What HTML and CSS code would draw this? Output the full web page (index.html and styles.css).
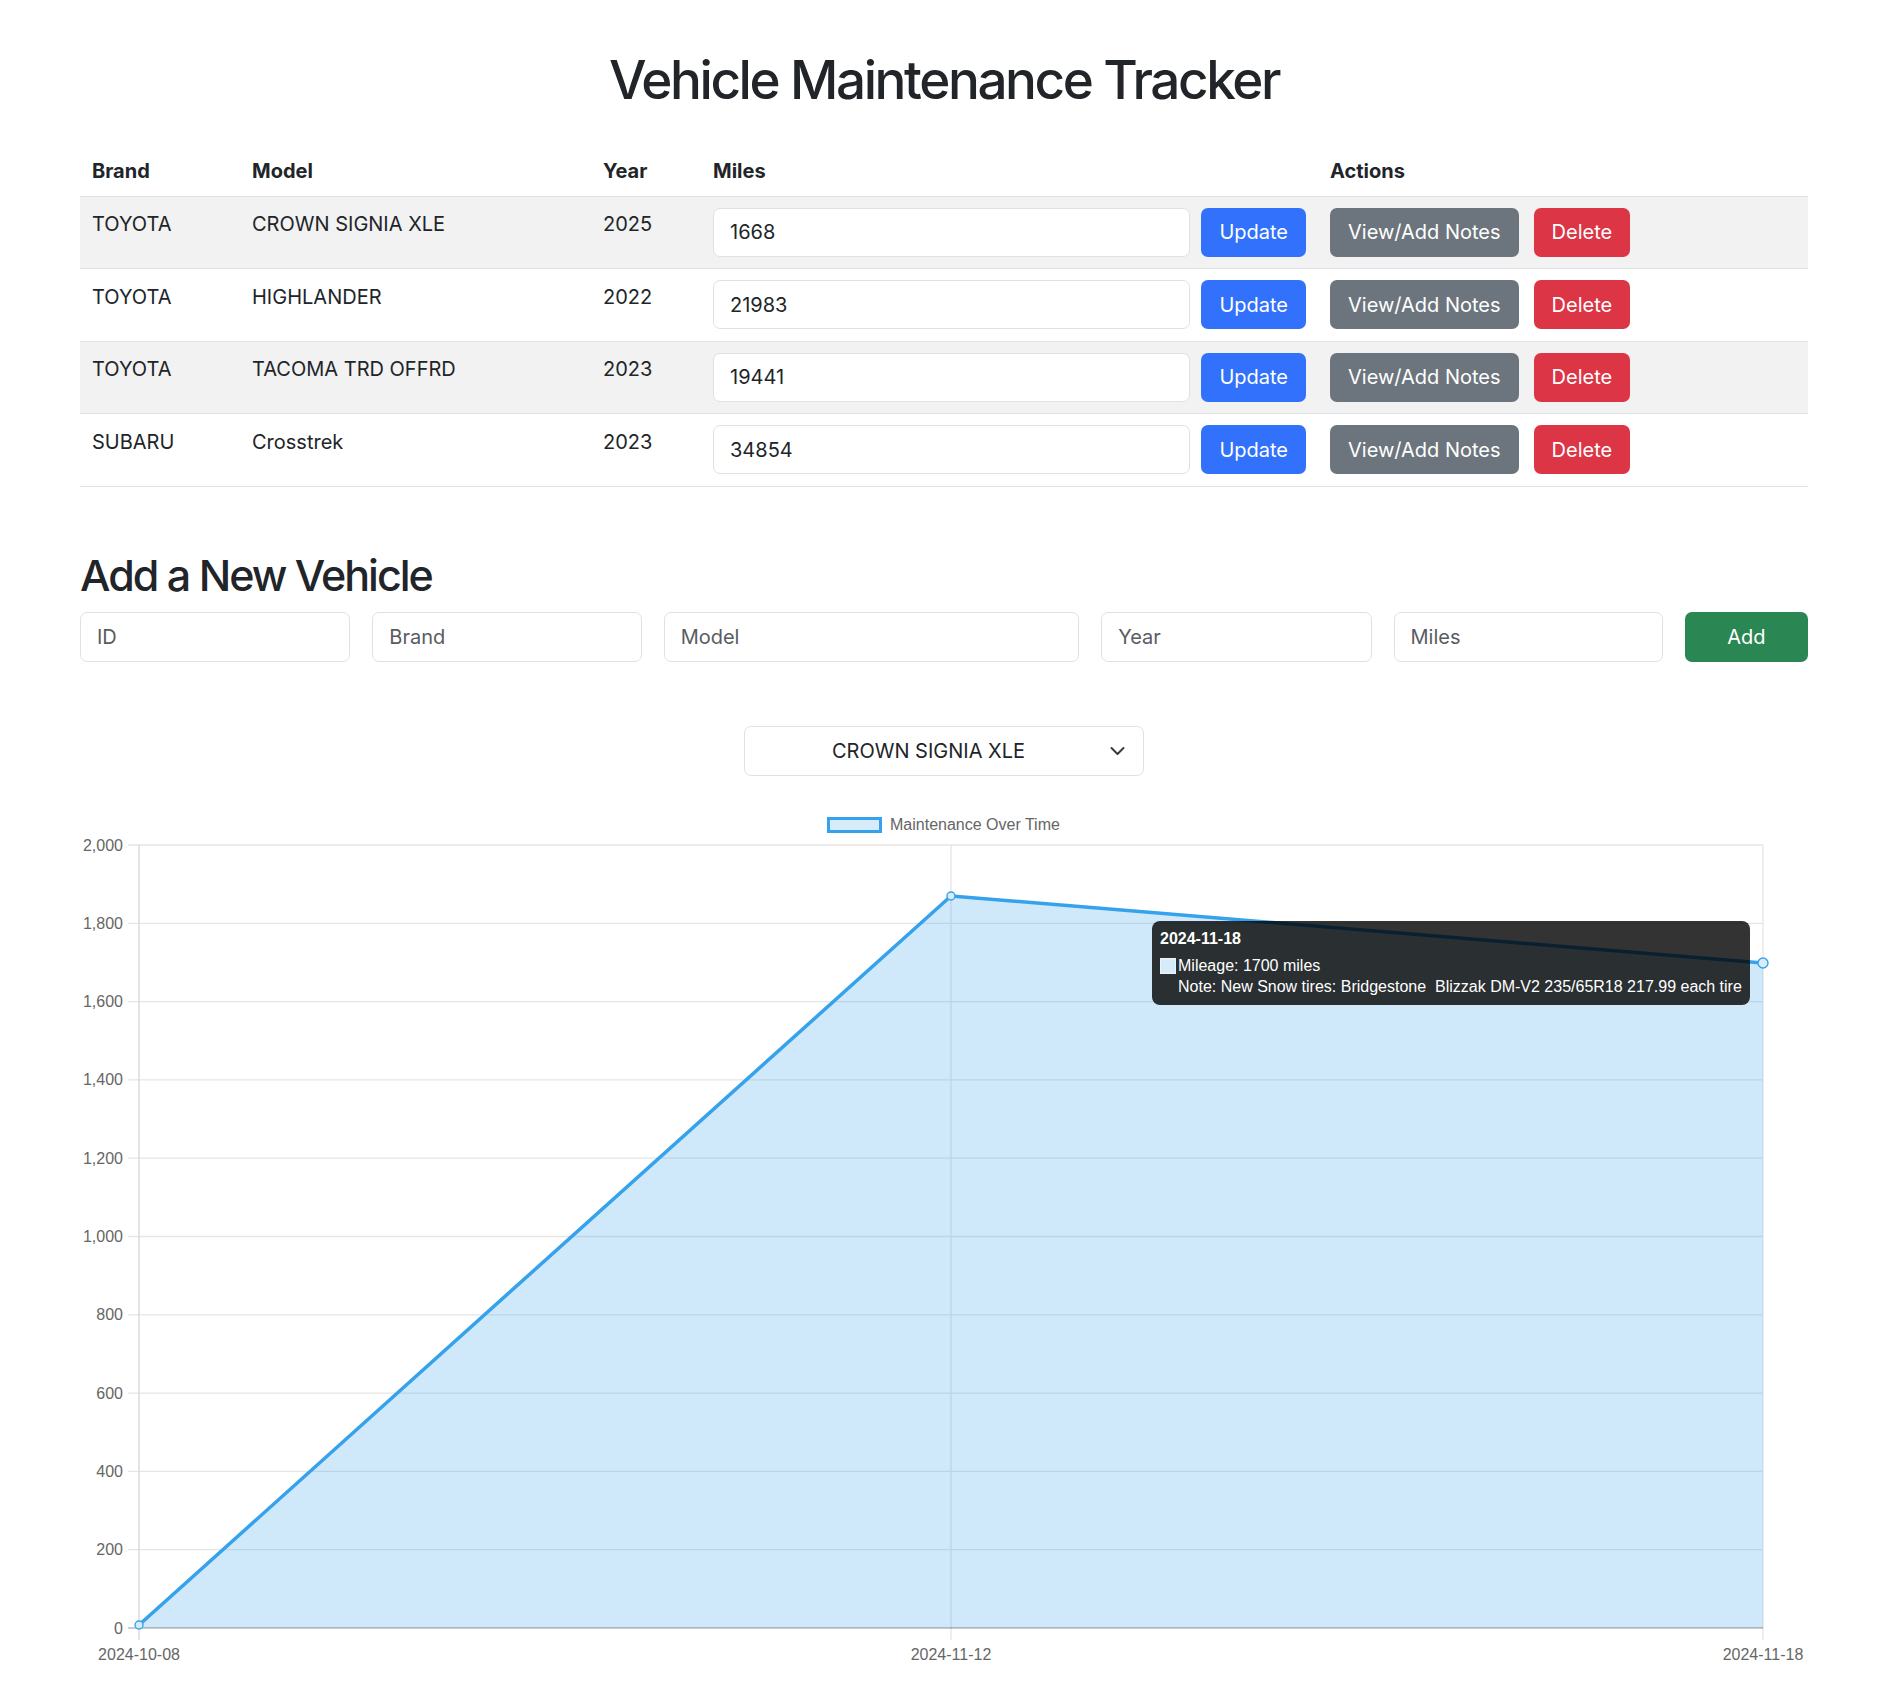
FILE: index.html
```html
<!DOCTYPE html>
<html lang="en">
<head>
<meta charset="utf-8">
<title>Vehicle Maintenance Tracker</title>
<link rel="stylesheet" href="styles.css">
</head>
<body>
<div class="container">
  <h1 class="page-title">Vehicle Maintenance Tracker</h1>

  <table class="vehicle-table">
    <colgroup>
      <col class="c-brand"><col class="c-model"><col class="c-year"><col class="c-miles"><col class="c-actions">
    </colgroup>
    <thead>
      <tr><th>Brand</th><th>Model</th><th>Year</th><th>Miles</th><th>Actions</th></tr>
    </thead>
    <tbody>
      <tr>
        <td class="txt">TOYOTA</td><td class="txt">CROWN SIGNIA XLE</td><td class="txt">2025</td>
        <td><div class="miles-cell"><input class="field" type="text" value="1668"><button class="btn btn-primary">Update</button></div></td>
        <td><div class="actions-cell"><button class="btn btn-secondary">View/Add Notes</button><button class="btn btn-danger">Delete</button></div></td>
      </tr>
      <tr>
        <td class="txt">TOYOTA</td><td class="txt">HIGHLANDER</td><td class="txt">2022</td>
        <td><div class="miles-cell"><input class="field" type="text" value="21983"><button class="btn btn-primary">Update</button></div></td>
        <td><div class="actions-cell"><button class="btn btn-secondary">View/Add Notes</button><button class="btn btn-danger">Delete</button></div></td>
      </tr>
      <tr>
        <td class="txt">TOYOTA</td><td class="txt">TACOMA TRD OFFRD</td><td class="txt">2023</td>
        <td><div class="miles-cell"><input class="field" type="text" value="19441"><button class="btn btn-primary">Update</button></div></td>
        <td><div class="actions-cell"><button class="btn btn-secondary">View/Add Notes</button><button class="btn btn-danger">Delete</button></div></td>
      </tr>
      <tr>
        <td class="txt">SUBARU</td><td class="txt">Crosstrek</td><td class="txt">2023</td>
        <td><div class="miles-cell"><input class="field" type="text" value="34854"><button class="btn btn-primary">Update</button></div></td>
        <td><div class="actions-cell"><button class="btn btn-secondary">View/Add Notes</button><button class="btn btn-danger">Delete</button></div></td>
      </tr>
    </tbody>
  </table>

  <h2 class="section-title">Add a New Vehicle</h2>
  <form class="add-form">
    <input class="field" type="text" placeholder="ID">
    <input class="field" type="text" placeholder="Brand">
    <input class="field" type="text" placeholder="Model">
    <input class="field" type="text" placeholder="Year">
    <input class="field" type="text" placeholder="Miles">
    <button class="btn btn-success" type="button">Add</button>
  </form>

  <div class="select-row">
    <div class="select-wrap">
      <select class="vehicle-select">
        <option>CROWN SIGNIA XLE</option>
        <option>HIGHLANDER</option>
        <option>TACOMA TRD OFFRD</option>
        <option>Crosstrek</option>
      </select>
      <svg class="chevron" viewBox="0 0 16 16" aria-hidden="true"><path d="m2 5 6 6 6-6" fill="none" stroke="#343a40" stroke-width="2" stroke-linecap="round" stroke-linejoin="round"/></svg>
    </div>
  </div>

  <div class="chart-wrap">
    <svg class="chart" width="1728" height="881" viewBox="0 0 1728 881">
      <!-- legend -->
      <rect x="748.5" y="18.5" width="52" height="13" fill="rgba(54,162,235,0.2)" stroke="#36a2eb" stroke-width="3"/>
      <text class="chart-text" x="810" y="30">Maintenance Over Time</text>

      <!-- horizontal grid -->
      <g stroke="#e5e5e5" stroke-width="1.3">
        <line x1="48" y1="45" x2="1683" y2="45"/>
        <line x1="48" y1="123.3" x2="1683" y2="123.3"/>
        <line x1="48" y1="201.6" x2="1683" y2="201.6"/>
        <line x1="48" y1="279.9" x2="1683" y2="279.9"/>
        <line x1="48" y1="358.2" x2="1683" y2="358.2"/>
        <line x1="48" y1="436.5" x2="1683" y2="436.5"/>
        <line x1="48" y1="514.8" x2="1683" y2="514.8"/>
        <line x1="48" y1="593.1" x2="1683" y2="593.1"/>
        <line x1="48" y1="671.4" x2="1683" y2="671.4"/>
        <line x1="48" y1="749.7" x2="1683" y2="749.7"/>
      </g>
      <!-- vertical grid -->
      <g stroke="#e5e5e5" stroke-width="1.3">
        <line x1="871" y1="45" x2="871" y2="840"/>
        <line x1="1683" y1="45" x2="1683" y2="840"/>
      </g>
      <line x1="59" y1="45" x2="59" y2="840" stroke="#d6d6d6" stroke-width="1.3"/>

      <!-- dataset -->
      <path d="M59 825 L871 96 L1683 163 L1683 828 L59 828 Z" fill="rgba(54,162,235,0.24)"/>
      <line x1="48" y1="828" x2="1683" y2="828" stroke="rgba(0,0,0,0.2)" stroke-width="2.2"/>
      <polyline points="59,825 871,96 1683,163" fill="none" stroke="#36a2eb" stroke-width="3.5" stroke-linejoin="round"/>
      <circle cx="59" cy="825" r="4" fill="#d7ecfb" stroke="#36a2eb" stroke-width="1.4"/>
      <circle cx="871" cy="96" r="4" fill="#d7ecfb" stroke="#36a2eb" stroke-width="1.4"/>
      <circle cx="1683" cy="163" r="5" fill="#d7ecfb" stroke="#36a2eb" stroke-width="1.4"/>

      <!-- y labels -->
      <g class="chart-text" text-anchor="end">
        <text x="43" y="50.5">2,000</text>
        <text x="43" y="128.8">1,800</text>
        <text x="43" y="207.1">1,600</text>
        <text x="43" y="285.4">1,400</text>
        <text x="43" y="363.7">1,200</text>
        <text x="43" y="442">1,000</text>
        <text x="43" y="520.3">800</text>
        <text x="43" y="598.6">600</text>
        <text x="43" y="676.9">400</text>
        <text x="43" y="755.2">200</text>
        <text x="43" y="833.5">0</text>
      </g>
      <!-- x labels -->
      <g class="chart-text" text-anchor="middle">
        <text x="59" y="860">2024-10-08</text>
        <text x="871" y="860">2024-11-12</text>
        <text x="1683" y="860">2024-11-18</text>
      </g>
    </svg>

    <div class="tooltip">
      <div class="tt-title">2024-11-18</div>
      <div class="tt-line"><span class="tt-swatch"></span>Mileage: 1700 miles</div>
      <div class="tt-line tt-note">Note: New Snow tires: Bridgestone  Blizzak DM-V2 235/65R18 217.99 each tire</div>
    </div>
  </div>
</div>
</body>
</html>
```
FILE: styles.css
```css
* {
  box-sizing: border-box;
}

body {
  margin: 0;
  background: #fff;
  color: #212529;
  font-family: Inter, "Noto Sans", "Liberation Sans", sans-serif;
  font-size: 20px;
  line-height: 1.5;
}

.container {
  width: 1728px;
  margin-left: 80px;
}

.page-title {
  margin: 49px 0 0;
  font-size: 53px;
  font-weight: 500;
  line-height: 1.2;
  text-align: center;
  letter-spacing: -2.4px;
}

/* table */
.vehicle-table {
  width: 100%;
  margin-top: 29px;
  border-collapse: collapse;
  table-layout: fixed;
}

.c-brand { width: 160px; }
.c-model { width: 351px; }
.c-year { width: 110px; }
.c-miles { width: 617px; }
.c-actions { width: 490px; }

.vehicle-table th {
  text-align: left;
  font-weight: 700;
  padding: 14px 12px 10px;
  line-height: 30px;
  border-bottom: 1px solid #dee2e6;
}

.vehicle-table td {
  padding: 11px 12px 11.5px;
  line-height: 30px;
  vertical-align: top;
  border-bottom: 1px solid #dee2e6;
}

.vehicle-table td.txt {
  padding-top: 12.5px;
}

.vehicle-table tbody tr:nth-child(odd) td {
  background: #f2f2f2;
}

.miles-cell {
  display: flex;
  gap: 11px;
}

.miles-cell .field {
  flex: 1;
  min-width: 0;
}

.actions-cell {
  display: flex;
  gap: 15px;
}

/* controls */
.field {
  font-family: inherit;
  font-size: 20px;
  color: #212529;
  background: #fff;
  border: 1px solid #dee2e6;
  border-radius: 7px;
  padding: 0 16px;
  height: 49px;
  outline: none;
}

.field::placeholder {
  color: #595c5f;
}

.btn {
  font-family: inherit;
  font-size: 20px;
  line-height: 30px;
  color: #fff;
  border: 0;
  border-radius: 7px;
  padding: 0 18px;
  height: 49px;
  cursor: pointer;
  white-space: nowrap;
}

.btn-primary { background: #3171fc; }
.btn-secondary { background: #6c757d; }
.btn-danger { background: #dc3545; }
.btn-success { background: #2a8754; }

/* add form */
.section-title {
  margin: 63.5px 0 10.5px;
  font-size: 43px;
  font-weight: 500;
  line-height: 1.2;
  letter-spacing: -2px;
}

.add-form {
  display: grid;
  grid-template-columns: 270fr 269fr 415fr 270fr 269fr 123fr;
  gap: 22px;
}

.add-form .field,
.add-form .btn {
  width: 100%;
  height: 50px;
}

/* select */
.select-row {
  margin-top: 64px;
  display: flex;
  justify-content: center;
}

.select-wrap {
  position: relative;
  width: 400px;
}

.vehicle-select {
  appearance: none;
  -webkit-appearance: none;
  display: block;
  width: 100%;
  height: 50px;
  padding: 0 48px 0 17px;
  font-family: inherit;
  font-size: 20px;
  color: #212529;
  background: #fff;
  border: 1px solid #dee2e6;
  border-radius: 7px;
  text-align: center;
  text-align-last: center;
  outline: none;
}

.chevron {
  position: absolute;
  right: 16px;
  top: 17px;
  width: 21px;
  height: 16px;
  pointer-events: none;
}

/* chart */
.chart-wrap {
  position: relative;
  margin-top: 24px;
  height: 881px;
}

.chart {
  display: block;
}

.chart-text {
  font-family: "Liberation Sans", Arial, sans-serif;
  font-size: 16px;
  fill: #666;
}

.tooltip {
  position: absolute;
  left: 1072px;
  top: 121px;
  padding: 7px 8px 8px;
  background: rgba(0, 0, 0, 0.8);
  color: #fff;
  border-radius: 8px;
  font-family: "Liberation Sans", Arial, sans-serif;
  font-size: 16px;
  line-height: 21px;
}

.tt-title {
  font-weight: 700;
  margin-bottom: 6px;
}

.tt-line {
  position: relative;
  padding-left: 18px;
}

.tt-note {
  white-space: pre;
}

.tt-swatch {
  position: absolute;
  left: 0;
  top: 3px;
  width: 16px;
  height: 16px;
  background: #d7ecfb;
  border: 1px solid #eaf4fd;
}
```
